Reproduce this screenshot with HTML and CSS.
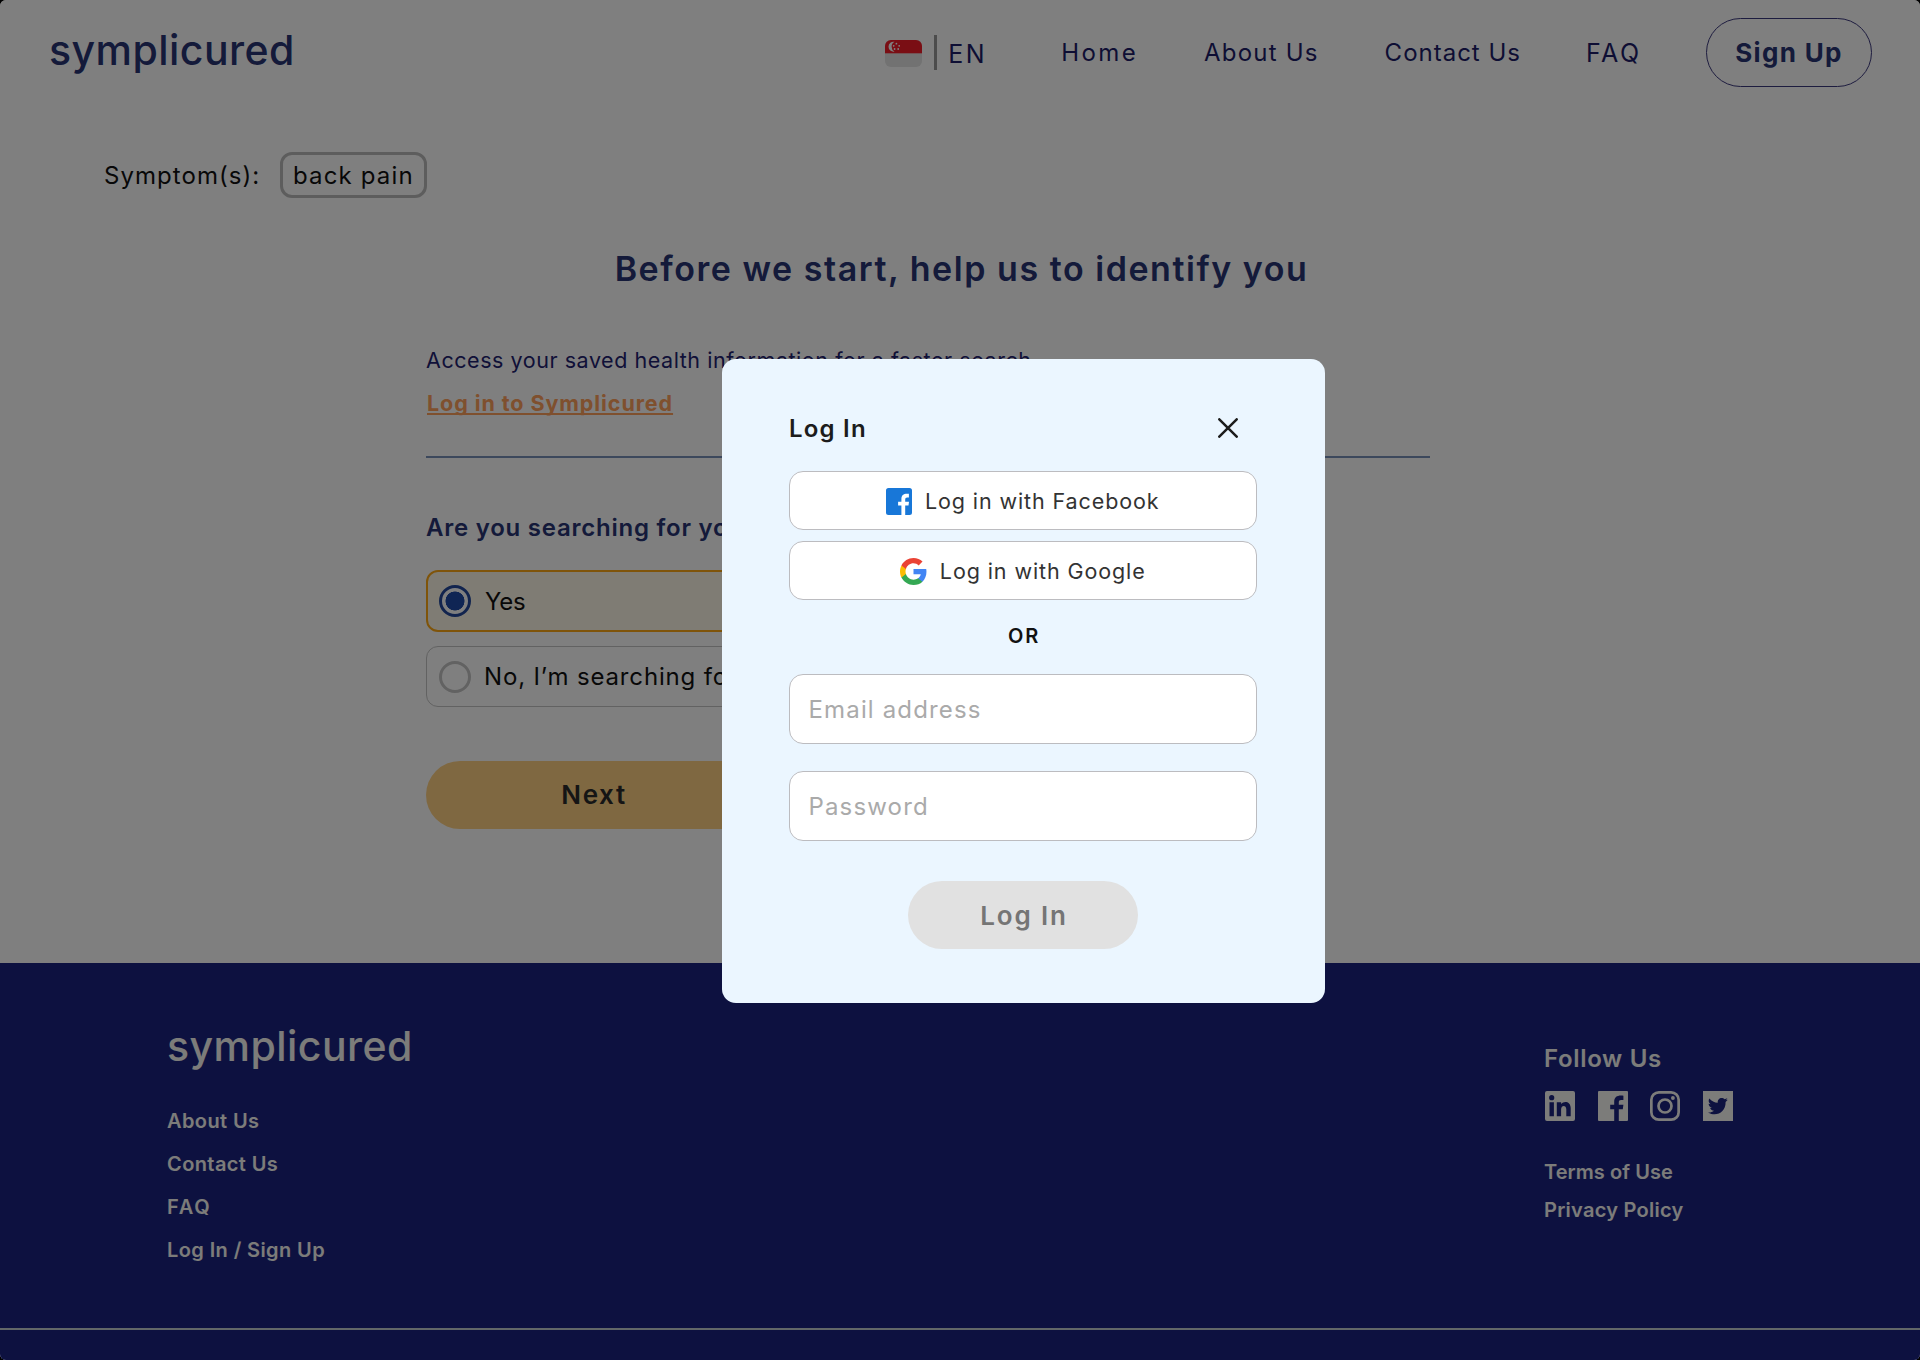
FILE: index.html
```html
<!DOCTYPE html>
<html lang="en">
<head>
<meta charset="utf-8">
<title>Symplicured</title>
<link rel="stylesheet" href="styles.css">
</head>
<body>
<div class="page">
  <header class="header">
    <a class="logo">symplicured</a>
    <nav class="nav">
      <svg class="flag" viewBox="0 0 37 27">
        <clipPath id="flag-clip"><rect width="37" height="27" rx="6"/></clipPath>
        <g clip-path="url(#flag-clip)">
          <rect width="37" height="27" fill="#e4e4e4"/>
          <rect width="37" height="13.3" fill="#f51c28"/>
          <path d="M9.500 1.800a5 5 0 1 0 0 9.800a5.600 5.600 0 0 1 0-9.800z" fill="#fff"/>
          <g fill="#fff"><circle cx="11.400" cy="3.700" r=".9"/><circle cx="14.200" cy="5.800" r=".9"/><circle cx="13.200" cy="9" r=".9"/><circle cx="9.600" cy="9" r=".9"/><circle cx="8.700" cy="5.800" r=".9"/></g>
        </g>
      </svg>
      <span class="divider"></span>
      <a class="nav-link lang">EN</a>
      <a class="nav-link home">Home</a>
      <a class="nav-link about">About Us</a>
      <a class="nav-link contact">Contact Us</a>
      <a class="nav-link faq">FAQ</a>
      <a class="signup">Sign Up</a>
    </nav>
  </header>

  <main class="main">
    <div class="symptoms">
      <span class="symptoms-label">Symptom(s):</span>
      <span class="tag">back pain</span>
    </div>
    <h1 class="title">Before we start, help us to identify you</h1>
    <section class="form">
      <p class="intro">Access your saved health information for a faster search</p>
      <a class="login-link">Log in to Symplicured</a>
      <hr class="rule">
      <h2 class="question">Are you searching for yourself?</h2>
      <label class="option selected"><span class="radio"></span><span class="yes">Yes</span></label>
      <label class="option"><span class="radio"></span><span>No, I’m searching for someone else</span></label>
      <button class="next">Next</button>
    </section>
  </main>

  <footer class="footer">
    <div class="footer-main">
      <div class="footer-left">
        <a class="logo footer-logo">symplicured</a>
        <a class="footer-link">About Us</a>
        <a class="footer-link">Contact Us</a>
        <a class="footer-link faq-link">FAQ</a>
        <a class="footer-link">Log In / Sign Up</a>
      </div>
      <div class="footer-right">
        <h3 class="follow">Follow Us</h3>
        <div class="social">
          <svg viewBox="0 0 30 30"><path fill-rule="evenodd" fill="currentColor" d="M2 0h26a2 2 0 0 1 2 2v26a2 2 0 0 1-2 2H2a2 2 0 0 1-2-2V2a2 2 0 0 1 2-2zM6.700 4.100a2.600 2.600 0 1 0 0 5.200a2.600 2.600 0 0 0 0-5.200zM4.500 11.300v14h4.400v-14zM11.800 11.300v14h4.300v-7c0-4.400 5.200-4.600 5.200 0v7h4.400v-8.200c0-7-7-7.600-9.600-4v-1.800z"/></svg>
          <svg viewBox="0 0 30 30"><path fill="currentColor" d="M1 0h28a1 1 0 0 1 1 1v28a1 1 0 0 1-1 1h-8.200V18.300h4l.6-4.500h-4.600v-2.600c0-1.500.7-2.300 2.300-2.300h2.300V4.700c-6-.7-9.200 1.200-9.200 6.200v2.900h-4v4.500h4V30H1a1 1 0 0 1-1-1V1a1 1 0 0 1 1-1z"/></svg>
          <svg viewBox="0 0 30 30"><g fill="none" stroke="currentColor" stroke-width="2.700"><rect x="1.350" y="1.350" width="27.300" height="27.300" rx="7.500"/><circle cx="15" cy="15" r="6.500"/></g><circle cx="22.900" cy="7" r="1.900" fill="currentColor"/></svg>
          <svg viewBox="0 0 30 30"><path fill-rule="evenodd" fill="currentColor" d="M0 0h30v30H0zM24.800 8.700l-2.200.6c.8-.5 1.400-1.200 1.700-2.100l-2.600 1c-3-3-7.600-.5-6.900 3.600c-3.300-.1-6.300-1.700-8.500-4.300c-1.200 2.100-.6 4.400 1.300 5.700l-2-.5c0 1.900 1.400 3.600 3.400 4.100l-1.900.1c.6 1.600 2 2.700 3.900 2.800c-1.700 1.300-3.800 1.900-6 1.700c8 4.800 17.800.3 17.600-10.400z"/></svg>
        </div>
        <a class="legal terms">Terms of Use</a>
        <a class="legal">Privacy Policy</a>
      </div>
    </div>
    <div class="footer-bottom"></div>
  </footer>

  <div class="overlay">
    <div class="modal">
      <div class="modal-head">
        <h2 class="modal-title">Log In</h2>
        <svg class="close" viewBox="0 0 20 20"><path d="M1.300 1.300 18.700 18.700M18.700 1.300 1.300 18.700" stroke="#1c1c1c" stroke-width="2.500" stroke-linecap="round"/></svg>
      </div>
      <button class="provider">
        <svg width="26" height="27" viewBox="0 0 26 27"><path fill="#1877d8" d="M2.500 0h21A2.500 2.500 0 0 1 26 2.500v22a2.500 2.500 0 0 1-2.500 2.500H19.200V17.500h3.300l.5-3.700h-3.800v-2.200c0-1.300.6-2 2-2h1.700V5.800c-4.900-.6-7.500 1-7.500 5.100v2.900h-3.300v3.700h3.300V27H2.500A2.500 2.500 0 0 1 0 24.500v-22A2.500 2.500 0 0 1 2.500 0z"/></svg>
        <span>Log in with Facebook</span>
      </button>
      <button class="provider">
        <svg width="27" height="27" viewBox="2 2 44 44"><path fill="#4285f4" d="M45.120 24.500c0-1.560-.14-3.060-.4-4.500H24v8.510h11.840c-.51 2.750-2.060 5.080-4.390 6.640v5.520h7.110c4.160-3.830 6.560-9.470 6.560-16.170z"/><path fill="#34a853" d="M24 46c5.940 0 10.920-1.970 14.560-5.330l-7.110-5.520c-1.970 1.320-4.490 2.100-7.450 2.100-5.730 0-10.580-3.870-12.310-9.070H4.340v5.700C7.960 41.070 15.400 46 24 46z"/><path fill="#fbbc05" d="M11.690 28.180C11.250 26.860 11 25.450 11 24s.25-2.860.69-4.180v-5.700H4.340C2.850 17.090 2 20.450 2 24s.85 6.910 2.340 9.880l7.350-5.700z"/><path fill="#ea4335" d="M24 10.750c3.230 0 6.130 1.110 8.410 3.290l6.310-6.310C34.910 4.180 29.930 2 24 2 15.400 2 7.960 6.930 4.340 14.120l7.350 5.700c1.730-5.200 6.580-9.070 12.310-9.070z"/></svg>
        <span>Log in with Google</span>
      </button>
      <div class="or">OR</div>
      <input class="field" type="email" placeholder="Email address">
      <input class="field" type="password" placeholder="Password">
      <button class="submit" disabled>Log In</button>
    </div>
  </div>
</div>
</body>
</html>
```

FILE: styles.css
```css
* { box-sizing: border-box; }

body {
  margin: 0;
  background: #000;
  font-family: Inter, "Open Sans", sans-serif;
  font-size: 24px;
  color: #111;
}

h1, h2, h3, p { margin: 0; }
button, input { font-family: inherit; margin: 0; }

.page {
  position: relative;
  display: flex;
  flex-direction: column;
  width: 1920px;
  height: 1360px;
  overflow: hidden;
  background: #fff;
  border-radius: 6px;
}

/* Header */
.header {
  display: flex;
  align-items: center;
  justify-content: space-between;
  height: 105px;
  padding: 0 48px;
  color: #1d1c68;
}

.logo {
  font-size: 41px;
  font-weight: 500;
  line-height: 50px;
  letter-spacing: .450px;
  color: #283474;
}

.header .logo { margin: 0 0 6px 1px; }

.nav { display: flex; align-items: center; }
.flag { width: 37px; height: 27px; margin-top: 2px; }
.divider { width: 3px; height: 35px; margin-left: 12px; background: #999; }
.nav-link { line-height: 30px; letter-spacing: 1.200px; }
.lang { width: 42px; margin: 2px 0 0 11px; font-size: 25px; letter-spacing: 2.500px; }
.home { margin-left: 71px; letter-spacing: 2.400px; }
.about { margin-left: 66px; }
.contact { margin-left: 66px; letter-spacing: 1px; }
.faq { width: 58px; margin-left: 65px; font-size: 25px; letter-spacing: 2.500px; }

.signup {
  width: 166px;
  height: 69px;
  margin-left: 62px;
  border: 1.500px solid #3b387e;
  border-radius: 35px;
  font-size: 26px;
  font-weight: 700;
  line-height: 67px;
  letter-spacing: 1.350px;
  text-align: center;
  color: #283474;
}

/* Main */
.main { height: 858px; padding-top: 47px; }
.symptoms { display: flex; align-items: center; height: 46px; padding-left: 104px; }
.symptoms-label { width: 176px; letter-spacing: 1.050px; }

.tag {
  width: 147px;
  height: 46px;
  padding-left: 10px;
  border: 3px solid #bbb;
  border-radius: 12px;
  line-height: 41px;
  letter-spacing: 1.150px;
}

.title {
  margin-top: 46px;
  padding-left: 3px;
  font-size: 34px;
  font-weight: 600;
  line-height: 50px;
  letter-spacing: 1.540px;
  text-align: center;
  color: #283474;
}

.form { display: flex; flex-direction: column; width: 1004px; margin: 46px 0 0 426px; }
.intro { font-size: 21.500px; line-height: 41px; letter-spacing: .550px; color: #1f2270; }

.login-link {
  align-self: flex-start;
  margin: 2px 0 0 1px;
  font-size: 21.500px;
  font-weight: 700;
  line-height: 40px;
  letter-spacing: .920px;
  color: #ffa05c;
  text-decoration: underline;
  text-decoration-thickness: 1.500px;
  text-underline-offset: 2px;
  text-decoration-skip-ink: none;
}

.rule { width: 100%; height: 2px; margin: 33px 0 50px; border: 0; background: #7890b8; }
.question { font-size: 24px; font-weight: 600; line-height: 40px; letter-spacing: .760px; color: #283474; }

.option {
  display: flex;
  align-items: center;
  gap: 13px;
  width: 800px;
  height: 61px;
  margin-top: 14px;
  padding-left: 12px;
  border: 1.500px solid #c4c4c4;
  border-radius: 12px;
  letter-spacing: .850px;
}

.option.selected {
  height: 62px;
  margin-top: 22px;
  padding-left: 11px;
  border: 2.500px solid #ffa915;
  background: #fff9e8;
}

.yes { margin-left: 1px; letter-spacing: -.200px; }
.radio { width: 32px; height: 32px; border: 3px solid #c4c4c4; border-radius: 50%; }

.selected .radio {
  border-color: #24499c;
  background: radial-gradient(circle, #1f4ba8 9.200px, #fff 9.800px);
}

.next {
  width: 334px;
  height: 68px;
  margin-top: 54px;
  padding: 0 0 1px 2px;
  border: 0;
  border-radius: 34px;
  background: #ffd083;
  font-size: 26px;
  font-weight: 600;
  letter-spacing: 1.600px;
  color: #2b2b2b;
}

/* Footer */
.footer { display: flex; flex-direction: column; height: 397px; background: #1a2280; color: #f8f8f4; }

.footer-main {
  display: flex;
  justify-content: space-between;
  height: 365px;
  padding: 58px 186px 0 167px;
}

.footer-left, .footer-right { display: flex; flex-direction: column; }
.footer-logo { margin-bottom: 29px; color: #f8f8f4; }
.footer-link { font-size: 20px; font-weight: 600; line-height: 43px; letter-spacing: .400px; }
.faq-link { letter-spacing: 1.800px; }
.footer-right { width: 190px; padding-top: 19px; }
.follow { font-size: 24px; font-weight: 600; line-height: 37px; letter-spacing: .670px; }
.social { display: flex; justify-content: space-between; width: 188px; height: 30px; margin: 14px 0 33px 1px; }
.social svg { width: 30px; height: 30px; }
.legal { font-size: 20px; font-weight: 600; line-height: 37.500px; letter-spacing: .260px; }
.terms { letter-spacing: .060px; }
.footer-bottom { height: 32px; border-top: 2px solid #c4ced0; }

/* Login dialog */
.overlay { position: absolute; inset: 0; background: rgba(0, 0, 0, .5); }

.modal {
  position: absolute;
  left: 721.500px;
  top: 358.500px;
  display: flex;
  flex-direction: column;
  width: 603px;
  height: 644px;
  padding: 49.500px 67.500px 0;
  border-radius: 14px;
  background: #ebf6ff;
}

.modal-head { display: flex; align-items: center; justify-content: space-between; height: 40px; padding-right: 19px; }
.modal-title { font-size: 24px; font-weight: 600; letter-spacing: 1.220px; color: #1c1c1c; }
.close { width: 20px; height: 20px; }

.provider {
  display: flex;
  align-items: center;
  justify-content: center;
  gap: 12.500px;
  height: 59px;
  margin-top: 11px;
  padding: 1px 0 0;
  border: 1.500px solid #bcbcc0;
  border-radius: 14px;
  background: #fff;
  font-size: 21.500px;
  letter-spacing: .900px;
  color: #333;
}

.modal-head + .provider { margin-top: 23px; }
.or { margin: 21px 0 23px; padding-left: 2px; font-size: 20px; font-weight: 600; line-height: 30px; letter-spacing: 1.800px; text-align: center; }

.field {
  width: 100%;
  height: 70px;
  margin-bottom: 27px;
  padding: 1px 18.500px 0;
  border: 1.500px solid #bcbcc0;
  border-radius: 14px;
  background: #fff;
  font-size: 24px;
  letter-spacing: 1.150px;
}

.field::placeholder { color: #aaa; opacity: 1; }

.submit {
  align-self: center;
  width: 230px;
  height: 68px;
  margin-top: 13px;
  padding: 0 0 0 2px;
  border: 0;
  border-radius: 34px;
  background: #e1e1e1;
  font-size: 26px;
  font-weight: 600;
  letter-spacing: 1.800px;
  color: #757575;
}
```
